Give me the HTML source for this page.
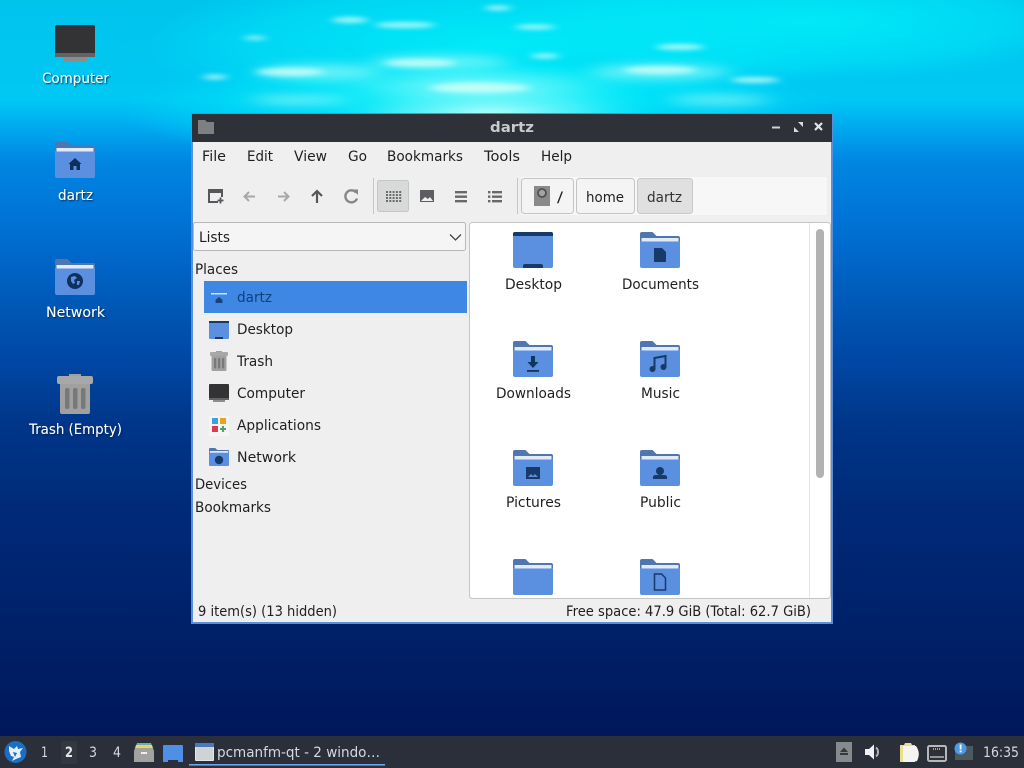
<!DOCTYPE html>
<html><head><meta charset="utf-8"><title>dartz</title>
<style>
html,body{margin:0;padding:0;width:1024px;height:768px;overflow:hidden;background:#003a8a}
svg{display:block}
text{font-family:"DejaVu Sans","Liberation Sans",sans-serif;font-size:14.5px;fill:#1f1f1f}
.d text{fill:#fff}
.t text{fill:#d5d8dc}
</style></head><body>
<svg width="1024" height="768" viewBox="0 0 1024 768" xmlns="http://www.w3.org/2000/svg">
<defs>
<linearGradient id="bg" x1="0" y1="0" x2="0" y2="1">
<stop offset="0" stop-color="#00c4ec"/><stop offset=".13" stop-color="#00c8f4"/><stop offset=".163" stop-color="#00acf0"/><stop offset=".21" stop-color="#0086e2"/><stop offset=".29" stop-color="#0072d6"/><stop offset=".397" stop-color="#0058b6"/><stop offset=".476" stop-color="#0046a2"/><stop offset=".557" stop-color="#003588"/><stop offset=".664" stop-color="#002a78"/><stop offset=".824" stop-color="#002068"/><stop offset="1" stop-color="#001456"/>
</linearGradient>
<radialGradient id="glow" cx=".5" cy=".5" r=".5"><stop offset="0" stop-color="#c8fffb" stop-opacity=".95"/><stop offset=".5" stop-color="#70f8fa" stop-opacity=".6"/><stop offset="1" stop-color="#00eef8" stop-opacity="0"/></radialGradient>
<radialGradient id="glow2" cx=".5" cy=".5" r=".5"><stop offset="0" stop-color="#00f2fa" stop-opacity=".85"/><stop offset=".7" stop-color="#00e8f8" stop-opacity=".5"/><stop offset="1" stop-color="#00e0f8" stop-opacity="0"/></radialGradient>
<filter id="b3" x="-50%" y="-200%" width="200%" height="500%"><feGaussianBlur stdDeviation="5 2.400"/></filter>
<filter id="b6" x="-30%" y="-100%" width="160%" height="300%"><feGaussianBlur stdDeviation="12 5"/></filter>
<filter id="sh" x="-20%" y="-30%" width="140%" height="170%"><feDropShadow dx="1" dy="1" stdDeviation=".7" flood-color="#00204a" flood-opacity=".9"/></filter>
<symbol id="folder" viewBox="0 0 40 36" overflow="visible">
<path d="M2 0H12.500L16.500 4H38a2 2 0 0 1 2 2V10H0V2a2 2 0 0 1 2-2z" fill="#4f76af"/>
<path d="M1.500 6H38.500V10H1.500z" fill="#e2eaf8"/>
<path d="M0 9H1.500L2 9.500H38L38.500 9H40V34a2 2 0 0 1-2 2H2a2 2 0 0 1-2-2z" fill="#5a90df"/>
</symbol>
<symbol id="trash" viewBox="0 0 36 40">
<rect x="12" y="0" width="12" height="3" fill="#a0a0a0"/>
<rect x="0" y="2" width="36" height="8" rx="2" fill="#a8a8a8"/>
<path d="M3 10H33V38a2 2 0 0 1-2 2H5a2 2 0 0 1-2-2z" fill="#a0a0a0"/>
<rect x="8" y="14" width="4.500" height="21" rx="2" fill="#787878"/><rect x="16" y="14" width="4.500" height="21" rx="2" fill="#787878"/><rect x="24" y="14" width="4.500" height="21" rx="2" fill="#787878"/>
</symbol>
<symbol id="comp" viewBox="0 0 40 36">
<rect x="8" y="30" width="24" height="6" rx="1" fill="#8c8c8c"/>
<path d="M2 0H38a2 2 0 0 1 2 2V32H0V2a2 2 0 0 1 2-2z" fill="#333335"/>
<rect x="0" y="28" width="40" height="4" fill="#636363"/>
</symbol>
</defs>

<!-- wallpaper -->
<rect width="1024" height="768" fill="url(#bg)"/>
<ellipse cx="800" cy="22" rx="300" ry="60" fill="url(#glow2)"/>
<ellipse cx="500" cy="45" rx="360" ry="75" fill="url(#glow2)"/>
<ellipse cx="480" cy="110" rx="360" ry="60" fill="url(#glow2)"/>
<ellipse cx="490" cy="118" rx="180" ry="62" fill="url(#glow)"/>
<ellipse cx="470" cy="85" rx="190" ry="24" fill="url(#glow)" opacity=".55"/>
<g fill="#b8fff8" filter="url(#b6)" opacity=".55">
<ellipse cx="320" cy="72" rx="60" ry="8"/><ellipse cx="440" cy="62" rx="70" ry="7"/><ellipse cx="660" cy="72" rx="70" ry="8"/><ellipse cx="720" cy="100" rx="50" ry="5"/><ellipse cx="300" cy="100" rx="50" ry="5"/>
</g>
<g fill="#d8fff8" filter="url(#b3)" opacity=".75">
<ellipse cx="350" cy="20" rx="18" ry="3"/><ellipse cx="405" cy="25" rx="30" ry="3"/><ellipse cx="498" cy="8" rx="13" ry="2.500"/><ellipse cx="535" cy="27" rx="20" ry="2.500"/><ellipse cx="680" cy="47" rx="24" ry="3"/><ellipse cx="255" cy="38" rx="11" ry="2"/><ellipse cx="215" cy="77" rx="12" ry="2.500"/><ellipse cx="290" cy="72" rx="34" ry="4"/><ellipse cx="420" cy="63" rx="36" ry="4"/><ellipse cx="545" cy="56" rx="14" ry="2.500"/><ellipse cx="480" cy="88" rx="50" ry="5"/><ellipse cx="660" cy="70" rx="36" ry="4"/><ellipse cx="755" cy="80" rx="24" ry="3"/>
</g>

<!-- desktop icons -->
<use href="#comp" x="55" y="25" width="40" height="36"/>
<use href="#folder" x="55" y="142" width="40" height="36"/>
<path d="M75 158l6.500 6H80v6h-3.500v-4h-3v4H70v-6h-1.500z" fill="#0f2f5e"/>
<use href="#folder" x="55" y="259" width="40" height="36"/>
<circle cx="75" cy="281" r="8" fill="#10305e"/><path d="M71 277l4-1 2 2-3 2 1 3-2 1-2-3zM77 281l3 0-1 4-2 0z" fill="#5a90df"/>
<use href="#trash" x="57" y="374" width="36" height="40"/>
<g class="d" filter="url(#sh)">
<text x="42" y="83" textLength="67" lengthAdjust="spacingAndGlyphs">Computer</text>
<text x="58" y="200" textLength="35" lengthAdjust="spacingAndGlyphs">dartz</text>
<text x="46" y="317" textLength="59" lengthAdjust="spacingAndGlyphs">Network</text>
<text x="29" y="434" textLength="93" lengthAdjust="spacingAndGlyphs">Trash (Empty)</text>
</g>

<!-- window -->
<rect x="191" y="113" width="642" height="511" fill="#5a8fdc"/>
<rect x="192" y="114" width="640" height="28" fill="#2e3138"/>
<rect x="193" y="142" width="638" height="480" fill="#efefef"/>
<path d="M198 120h7l2 2h7v12h-16z" fill="#7d7f82"/>
<text x="490" y="132" textLength="44" lengthAdjust="spacingAndGlyphs" style="fill:#c8cacd;font-weight:bold">dartz</text>
<rect x="772" y="126.500" width="8" height="2" fill="#d0d2d5"/>
<path d="M794 132v-5l5 5zM803 122v5l-5-5z" fill="#d8dadd"/>
<path d="M815 123l7 7M822 123l-7 7" stroke="#e2e4e6" stroke-width="2.200" fill="none"/>

<text x="202" y="161" textLength="24" lengthAdjust="spacingAndGlyphs">File</text>
<text x="247" y="161" textLength="26" lengthAdjust="spacingAndGlyphs">Edit</text>
<text x="294" y="161" textLength="33" lengthAdjust="spacingAndGlyphs">View</text>
<text x="348" y="161" textLength="19" lengthAdjust="spacingAndGlyphs">Go</text>
<text x="387" y="161" textLength="76" lengthAdjust="spacingAndGlyphs">Bookmarks</text>
<text x="484" y="161" textLength="36" lengthAdjust="spacingAndGlyphs">Tools</text>
<text x="541" y="161" textLength="31" lengthAdjust="spacingAndGlyphs">Help</text>

<!-- toolbar -->
<path d="M208 189h15v8h-2v-4h-11v8h8v2h-10z" fill="#55575b"/>
<path d="M217.500 200.500h6M220.500 197.500v6" stroke="#55575b" stroke-width="1.800"/>
<g fill="none" stroke-width="2">
<path d="M255 196.500h-10.500M249 192l-4.500 4.500 4.500 4.500M278 196.500h10.500M284 192l4.500 4.500-4.500 4.500" stroke="#a6a8aa"/>
<path d="M317 203v-12M312 196l5-5 5 5" stroke="#55575a" stroke-width="2.200"/>
<path d="M356 192.500a6 6 0 1 0 1 6" stroke="#85878a" stroke-width="2.400"/>
</g>
<path d="M352.500 189.500h5.500v5.500z" fill="#85878a"/>
<rect x="373" y="178" width="1" height="36" fill="#c6c6c6"/>
<rect x="377.500" y="180.500" width="31" height="31" rx="2" fill="#d8dada" stroke="#c4c6c6"/>
<g fill="#6a6c6e"><rect x="386" y="191" width="2" height="2"/><rect x="389.300" y="191" width="2" height="2"/><rect x="392.600" y="191" width="2" height="2"/><rect x="395.900" y="191" width="2" height="2"/><rect x="399.200" y="191" width="2" height="2"/><rect x="386" y="194" width="2" height="2"/><rect x="389.300" y="194" width="2" height="2"/><rect x="392.600" y="194" width="2" height="2"/><rect x="395.900" y="194" width="2" height="2"/><rect x="399.200" y="194" width="2" height="2"/><rect x="386" y="197" width="2" height="2"/><rect x="389.300" y="197" width="2" height="2"/><rect x="392.600" y="197" width="2" height="2"/><rect x="395.900" y="197" width="2" height="2"/><rect x="399.200" y="197" width="2" height="2"/><rect x="386" y="200" width="2" height="2"/><rect x="389.300" y="200" width="2" height="2"/><rect x="392.600" y="200" width="2" height="2"/><rect x="395.900" y="200" width="2" height="2"/><rect x="399.200" y="200" width="2" height="2"/></g>
<path d="M420 190h14v12h-14z" fill="#5c5e61"/><path d="M421 201l4-4 3 2 2-2 3 4z" fill="#efefef"/>
<path d="M455 191h12v2.400h-12zM455 195.500h12v2.400h-12zM455 200h12v2.400h-12z" fill="#66686a"/>
<path d="M488 191h2.400v2.400h-2.400zM492 191h10v2.400h-10zM488 195.500h2.400v2.400h-2.400zM492 195.500h10v2.400h-10zM488 200h2.400v2.400h-2.400zM492 200h10v2.400h-10z" fill="#66686a"/>
<rect x="517" y="178" width="1" height="36" fill="#c6c6c6"/>

<!-- path bar -->
<rect x="521" y="177" width="306" height="38" fill="#f7f7f7"/>
<rect x="521.500" y="178.500" width="52" height="35" rx="3" fill="#f4f4f4" stroke="#c4c4c4"/>
<rect x="534" y="186" width="16" height="20" fill="#8a8a8a"/><circle cx="542" cy="193" r="4" fill="#a4a4a4" stroke="#505050" stroke-width="1.800"/>
<text x="557" y="202" textLength="6" lengthAdjust="spacingAndGlyphs">/</text>
<rect x="576.500" y="178.500" width="58" height="35" rx="3" fill="#f4f4f4" stroke="#c4c4c4"/>
<text x="586" y="202" textLength="38" lengthAdjust="spacingAndGlyphs">home</text>
<rect x="637.500" y="178.500" width="55" height="35" rx="3" fill="#e0e0e0" stroke="#c8c8c8"/>
<text x="647" y="202" textLength="35" lengthAdjust="spacingAndGlyphs" style="fill:#333">dartz</text>

<!-- sidebar -->
<rect x="193.500" y="222.500" width="272" height="28" rx="2" fill="#f5f5f5" stroke="#b8b8b8"/>
<text x="199" y="242" textLength="31" lengthAdjust="spacingAndGlyphs">Lists</text>
<path d="M450 234.500l5.500 5.500 5.500-5.500" fill="none" stroke="#444" stroke-width="1.300"/>
<text x="195" y="274" textLength="43" lengthAdjust="spacingAndGlyphs">Places</text>
<rect x="204" y="281" width="263" height="32" fill="#3e88e4"/>
<text x="237" y="302" textLength="35" lengthAdjust="spacingAndGlyphs" style="fill:#133e7c">dartz</text>
<rect x="211" y="293" width="16" height="1.500" fill="#cfe0f7"/><path d="M219 297l3.500 3v3h-7v-3z" fill="#17437f"/>
<rect x="209" y="321" width="20" height="18" rx="1" fill="#5a90df"/><rect x="209" y="321" width="20" height="2" fill="#173a68"/><rect x="215" y="337" width="8" height="2" fill="#173a68"/>
<text x="237" y="334" textLength="56" lengthAdjust="spacingAndGlyphs">Desktop</text>
<use href="#trash" x="210" y="351" width="18" height="20"/>
<text x="237" y="366" textLength="36" lengthAdjust="spacingAndGlyphs">Trash</text>
<use href="#comp" x="209" y="384" width="20" height="18"/>
<text x="237" y="398" textLength="68" lengthAdjust="spacingAndGlyphs">Computer</text>
<rect x="209" y="416" width="20" height="20" rx="1" fill="#f5f5f5"/><rect x="212" y="418" width="6" height="6" fill="#35a2e6"/><rect x="220" y="418" width="6" height="6" fill="#f0a01e"/><rect x="212" y="426" width="6" height="6" fill="#dd3c46"/><path d="M223 426v6M220 429h6" stroke="#4aa564" stroke-width="2"/>
<text x="237" y="430" textLength="84" lengthAdjust="spacingAndGlyphs">Applications</text>
<use href="#folder" x="209" y="448" width="20" height="18"/><circle cx="219" cy="460" r="4.200" fill="#143a6e"/>
<text x="237" y="462" textLength="59" lengthAdjust="spacingAndGlyphs">Network</text>
<text x="195" y="489" textLength="52" lengthAdjust="spacingAndGlyphs">Devices</text>
<text x="195" y="512" textLength="76" lengthAdjust="spacingAndGlyphs">Bookmarks</text>

<!-- file pane -->
<rect x="469.500" y="222.500" width="361" height="376" rx="3" fill="#fff" stroke="#c4c4c4"/>
<rect x="809" y="223" width="1" height="375" fill="#e6e6e6"/>
<rect x="816" y="229" width="8" height="249" rx="4" fill="#b2b2b2"/>

<path d="M513 234a2 2 0 0 1 2-2h36a2 2 0 0 1 2 2v32a2 2 0 0 1-2 2h-36a2 2 0 0 1-2-2z" fill="#5a90df"/>
<path d="M513 236v-2a2 2 0 0 1 2-2h36a2 2 0 0 1 2 2v2z" fill="#173a68"/><path d="M523 268v-2a2 2 0 0 1 2-2h16a2 2 0 0 1 2 2v2z" fill="#173a68"/>
<text x="505" y="289" textLength="57" lengthAdjust="spacingAndGlyphs">Desktop</text>

<use href="#folder" x="640" y="232" width="40" height="36"/>
<path d="M654 248h8l4 4v9a1 1 0 0 1-1 1h-11z" fill="#173a68"/>
<text x="622" y="289" textLength="77" lengthAdjust="spacingAndGlyphs">Documents</text>

<use href="#folder" x="513" y="341" width="40" height="36"/>
<path d="M531 356h4v6h3.500l-5.500 6-5.500-6h3.500z" fill="#10355f"/><rect x="527" y="370" width="12" height="1.800" fill="#10355f"/>
<text x="496" y="398" textLength="75" lengthAdjust="spacingAndGlyphs">Downloads</text>

<use href="#folder" x="640" y="341" width="40" height="36"/>
<path d="M654.500 369v-11l11-2v11" fill="none" stroke="#173a68" stroke-width="2"/><circle cx="652.500" cy="369" r="3" fill="#173a68"/><circle cx="663.500" cy="367" r="3" fill="#173a68"/>
<text x="641" y="398" textLength="39" lengthAdjust="spacingAndGlyphs">Music</text>

<use href="#folder" x="513" y="450" width="40" height="36"/>
<rect x="526" y="467" width="14" height="12" fill="#173a68"/><path d="M528 477l3-3 2 2 2-2 3 3z" fill="#5a90df"/>
<text x="506" y="507" textLength="55" lengthAdjust="spacingAndGlyphs">Pictures</text>

<use href="#folder" x="640" y="450" width="40" height="36"/>
<circle cx="660" cy="471" r="4" fill="#173a68"/><path d="M653 479v-2q0-2 3-2h8q3 0 3 2v2z" fill="#173a68"/>
<text x="640" y="507" textLength="41" lengthAdjust="spacingAndGlyphs">Public</text>

<use href="#folder" x="513" y="559" width="40" height="36"/>
<use href="#folder" x="640" y="559" width="40" height="36"/>
<path d="M654.500 574h7l4 4v12h-11z" fill="none" stroke="#173a68" stroke-width="1.500"/>

<!-- status bar -->
<text x="198" y="616" textLength="139" lengthAdjust="spacingAndGlyphs">9 item(s) (13 hidden)</text>
<text x="566" y="616" textLength="245" lengthAdjust="spacingAndGlyphs">Free space: 47.9 GiB (Total: 62.7 GiB)</text>

<!-- taskbar -->
<rect x="0" y="736" width="1024" height="32" fill="#2b2f3a"/>
<circle cx="15.500" cy="752" r="11" fill="#1b6ec6"/>
<path d="M9 746l5 3 3-3 1 3 5-1-3 4 1 5-5 2-4 2 2-4-3-1-2-5z" fill="#e6f0fb"/><path d="M13 752l4 1-2 4z" fill="#1b6ec6"/>
<g class="t">
<text x="41" y="757" textLength="7" lengthAdjust="spacingAndGlyphs">1</text>
<rect x="61" y="741" width="16" height="23" fill="#33373f"/>
<text x="65" y="757" textLength="8" lengthAdjust="spacingAndGlyphs" style="font-weight:bold;fill:#e4e6e8">2</text>
<text x="89" y="757" textLength="8" lengthAdjust="spacingAndGlyphs">3</text>
<text x="113" y="757" textLength="8" lengthAdjust="spacingAndGlyphs">4</text>
</g>
<path d="M137 743h14l1 3h-16z" fill="#6db2a0"/><path d="M136 745h16l1 3h-18z" fill="#e4d66a"/>
<path d="M135 748h18l1 3v11h-20v-11z" fill="#a2a3a0"/><rect x="141" y="752" width="6" height="2" fill="#eee"/>
<path d="M163 746a1 1 0 0 1 1-1h18a1 1 0 0 1 1 1v16h-5v-2h-10v2h-5z" fill="#4f8fe6"/>
<rect x="195" y="743" width="19" height="18" rx="1" fill="#e4e6e8"/><rect x="195" y="743" width="19" height="4" fill="#4a78bc"/><rect x="196" y="747" width="17" height="13" fill="#cfd3d6"/>
<g class="t"><text x="217" y="757" textLength="163" lengthAdjust="spacingAndGlyphs">pcmanfm-qt - 2 windo…</text></g>
<rect x="189" y="764" width="196" height="1.600" fill="#6ea4e6"/>

<rect x="836" y="742" width="16" height="20" fill="#878a8d"/><path d="M840 752l4-4.500 4 4.500zM840 753h8v2h-8z" fill="#35383d"/>
<path d="M865 749h4l5-4.500v15l-5-4.500h-4z" fill="#f0f1f2"/><path d="M876 747.500a6 6 0 0 1 0 9" fill="none" stroke="#b0b2b4" stroke-width="2"/>
<path d="M900 745h4l1-2h6l1 2h3v17h-15z" fill="#eadf8c"/><path d="M903 746h13q5 7 1 15l-4 1h-10z" fill="#f4f4f0"/>
<rect x="928" y="746" width="18" height="15" rx="1.500" fill="#2d3036" stroke="#b5b7b8" stroke-width="2"/><path d="M930 757h14" stroke="#b5b7b8" stroke-width="1.500"/><path d="M933 749h8" stroke="#c8c8b0" stroke-width="1.500" stroke-dasharray="1 1"/>
<rect x="955" y="746" width="18" height="14" fill="#4c5a60"/>
<circle cx="960.500" cy="748.500" r="6" fill="#4d9be6"/><rect x="959.700" y="744.500" width="1.800" height="5" fill="#fff"/><rect x="959.700" y="750.500" width="1.800" height="1.800" fill="#fff"/>
<g class="t"><text x="983" y="757" textLength="36" lengthAdjust="spacingAndGlyphs">16:35</text></g>
</svg>
</body></html>
